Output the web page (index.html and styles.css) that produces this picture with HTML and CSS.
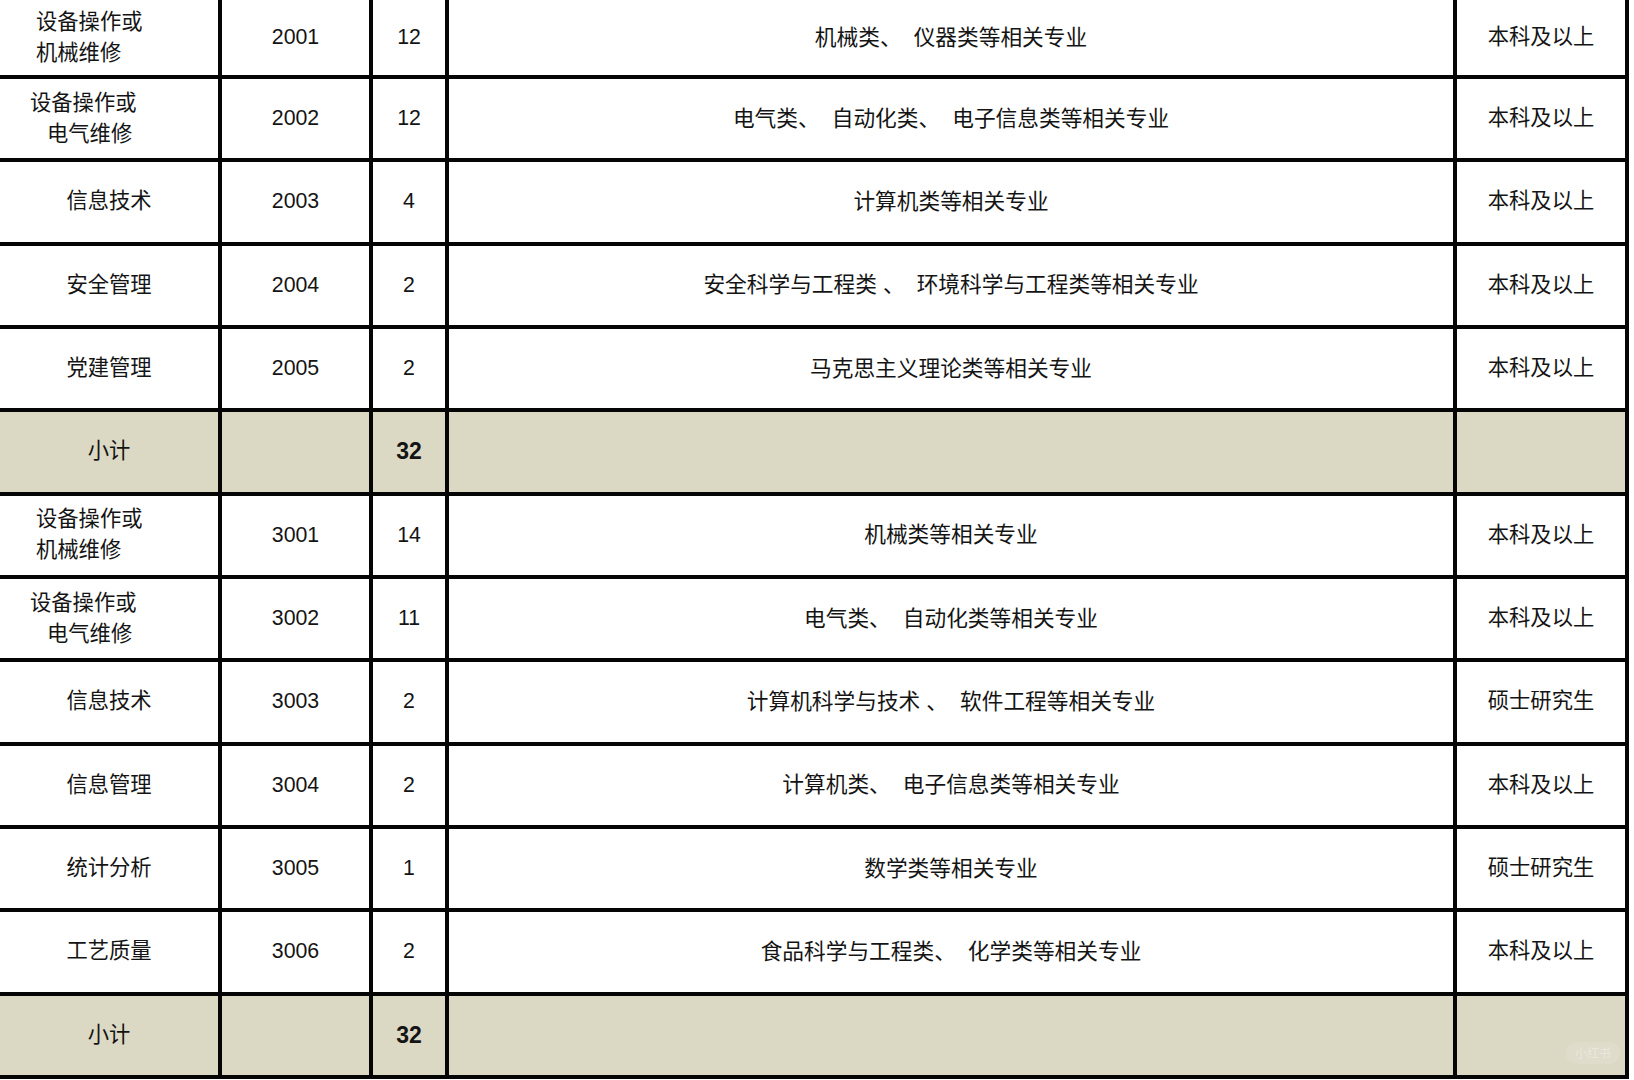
FILE: index.html
```html
<!DOCTYPE html>
<html lang="zh-CN">
<head>
<meta charset="utf-8">
<title>岗位需求表</title>
<link rel="stylesheet" href="styles.css">
</head>
<body>
<div class="sheet">
  <div class="c two a"><span>设备操作或</span><span>机械维修</span></div>
  <div class="c">2001</div><div class="c">12</div>
  <div class="c major">机械类、&nbsp;&nbsp;仪器类等相关专业</div><div class="c">本科及以上</div>

  <div class="c two b"><span>设备操作或</span><span class="l2">电气维修</span></div>
  <div class="c">2002</div><div class="c">12</div>
  <div class="c major">电气类、&nbsp;&nbsp;自动化类、&nbsp;&nbsp;电子信息类等相关专业</div><div class="c">本科及以上</div>

  <div class="c">信息技术</div>
  <div class="c">2003</div><div class="c">4</div>
  <div class="c major">计算机类等相关专业</div><div class="c">本科及以上</div>

  <div class="c">安全管理</div>
  <div class="c">2004</div><div class="c">2</div>
  <div class="c major">安全科学与工程类 、&nbsp;&nbsp;环境科学与工程类等相关专业</div><div class="c">本科及以上</div>

  <div class="c">党建管理</div>
  <div class="c">2005</div><div class="c">2</div>
  <div class="c major">马克思主义理论类等相关专业</div><div class="c">本科及以上</div>

  <div class="c sub">小计</div>
  <div class="c sub"></div><div class="c sub total">32</div>
  <div class="c sub"></div><div class="c sub"></div>

  <div class="c two a"><span>设备操作或</span><span>机械维修</span></div>
  <div class="c">3001</div><div class="c">14</div>
  <div class="c major">机械类等相关专业</div><div class="c">本科及以上</div>

  <div class="c two b"><span>设备操作或</span><span class="l2">电气维修</span></div>
  <div class="c">3002</div><div class="c">11</div>
  <div class="c major">电气类、&nbsp;&nbsp;自动化类等相关专业</div><div class="c">本科及以上</div>

  <div class="c">信息技术</div>
  <div class="c">3003</div><div class="c">2</div>
  <div class="c major">计算机科学与技术 、&nbsp;&nbsp;软件工程等相关专业</div><div class="c">硕士研究生</div>

  <div class="c">信息管理</div>
  <div class="c">3004</div><div class="c">2</div>
  <div class="c major">计算机类、&nbsp;&nbsp;电子信息类等相关专业</div><div class="c">本科及以上</div>

  <div class="c">统计分析</div>
  <div class="c">3005</div><div class="c">1</div>
  <div class="c major">数学类等相关专业</div><div class="c">硕士研究生</div>

  <div class="c">工艺质量</div>
  <div class="c">3006</div><div class="c">2</div>
  <div class="c major">食品科学与工程类、&nbsp;&nbsp;化学类等相关专业</div><div class="c">本科及以上</div>

  <div class="c sub">小计</div>
  <div class="c sub"></div><div class="c sub total">32</div>
  <div class="c sub"></div><div class="c sub"></div>
</div>
<div class="mark">小红书</div>
</body>
</html>
```

FILE: styles.css
```css
html, body {
  margin: 0;
  padding: 0;
  background: #ffffff;
}

body {
  position: relative;
  width: 1634px;
  height: 1080px;
  overflow: hidden;
  font-family: "Liberation Sans", "Noto Sans CJK SC", sans-serif;
  color: #141414;
}

.sheet {
  display: grid;
  grid-template-columns: 218px 147px 72px 1004px 168px;
  grid-template-rows: 75px;
  grid-auto-rows: 79.333px;
  gap: 4px;
  padding: 0 4px 4px 0;
  background: #050505;
  width: fit-content;
}

.c {
  background: #ffffff;
  display: flex;
  align-items: center;
  justify-content: center;
  font-size: 21.3px;
  line-height: 1;
  white-space: nowrap;
}

.c.major {
  font-size: 21.7px;
}

.c.two {
  flex-direction: column;
  align-items: flex-start;
  justify-content: center;
  line-height: 31px;
  box-sizing: border-box;
}

.c.two span {
  display: block;
}

.c.two.a {
  padding-left: 36px;
}

.c.two.b {
  padding-left: 30px;
}

.c.two.b .l2 {
  margin-left: 17px;
}

.c.sub {
  background: #dbd8c4;
}

.c.total {
  font-weight: bold;
  font-size: 23px;
}

.mark {
  position: absolute;
  left: 1566px;
  top: 1042px;
  width: 54px;
  height: 22px;
  border-radius: 11px;
  background: rgba(255, 255, 255, 0.12);
  color: rgba(255, 255, 255, 0.35);
  font-family: "Noto Sans CJK SC", sans-serif;
  font-size: 12px;
  line-height: 22px;
  text-align: center;
}
```
